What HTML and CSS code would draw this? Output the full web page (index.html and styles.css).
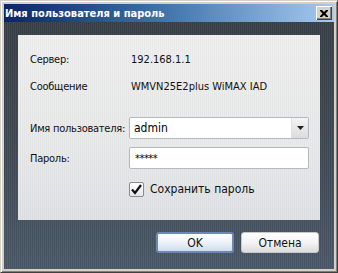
FILE: index.html
```html
<!DOCTYPE html>
<html lang="ru">
<head>
    <meta charset="UTF-8">
    <title>Имя пользователя и пароль</title>
    <link rel="stylesheet" href="styles.css">
</head>
<body>
    <div class="window">
        <div class="titlebar">
            <span class="title">Имя пользователя и пароль</span>
            <button class="close">
                <svg width="8" height="7" viewBox="0 0 8 7"><path d="M0 0h2l2 2 2-2h2v1l-2.5 2.5 2.5 2.5v1h-2l-2-2-2 2h-2v-1l2.5-2.5-2.5-2.5z" fill="#000"/></svg>
            </button>
        </div>
        <div class="content">
            <div class="panel">
                <div class="row row-server">
                    <span class="label">Сервер:</span>
                    <span class="value">192.168.1.1</span>
                </div>
                <div class="row row-message">
                    <span class="label">Сообщение</span>
                    <span class="value">WMVN25E2plus WiMAX IAD</span>
                </div>
                <div class="row row-user">
                    <span class="label">Имя пользователя:</span>
                    <div class="combo">
                        <span class="combo-text">admin</span>
                        <span class="combo-arrow">
                            <svg width="7" height="4" viewBox="0 0 7 4"><path d="M0 0h7l-3.5 4z" fill="#222"/></svg>
                        </span>
                    </div>
                </div>
                <div class="row row-pass">
                    <span class="label">Пароль:</span>
                    <div class="input">*****</div>
                </div>
                <div class="row row-save">
                    <span class="label"></span>
                    <label class="check">
                        <span class="box">
                            <svg width="13" height="13" viewBox="0 0 13 13"><path d="M2 6.5l3 3.5 6-8" fill="none" stroke="#111" stroke-width="2.2"/></svg>
                        </span>
                        Сохранить пароль
                    </label>
                </div>
            </div>
            <div class="actions">
                <button class="btn btn-ok">OK</button>
                <button class="btn">Отмена</button>
            </div>
        </div>
    </div>
</body>
</html>
```

FILE: styles.css
```css
body {
    margin: 0;
    background-color: #d4d0c8;
    font-family: 'DejaVu Sans Condensed', 'DejaVu Sans', sans-serif;
    font-size: 11px;
    color: #000000;
}

.window {
    width: 338px;
    height: 273px;
    box-sizing: border-box;
    padding: 3px;
    display: flex;
    flex-direction: column;
    background-color: #d4d0c8;
    border-top: 1px solid #d4d0c8;
    border-left: 1px solid #d4d0c8;
    border-right: 1px solid #404040;
    border-bottom: 1px solid #404040;
    box-shadow: inset 1px 1px 0 #ffffff, inset -1px -1px 0 #808080;
}

.titlebar {
    height: 18px;
    display: flex;
    align-items: center;
    justify-content: space-between;
    padding: 0 2px 0 1px;
    background: linear-gradient(90deg, #0a246a 0%, #3a6ea5 45%, #a6caf0 100%);
}

.title {
    color: #ffffff;
    font-weight: bold;
    font-size: 11px;
    white-space: nowrap;
}

.close {
    width: 16px;
    height: 14px;
    padding: 0;
    border: none;
    background-color: #d4d0c8;
    display: flex;
    align-items: center;
    justify-content: center;
    box-shadow: inset 1px 1px 0 #ffffff, inset -1px -1px 0 #404040, inset -2px -2px 0 #808080;
}

.content {
    flex: 1;
    display: flex;
    flex-direction: column;
    padding: 13px 14px 0 14px;
    background:
        repeating-linear-gradient(90deg, rgba(0, 0, 0, 0.07) 0 1px, rgba(255, 255, 255, 0.03) 1px 2px),
        linear-gradient(180deg, #3a424a 0%, #414c57 50%, #4c5b6b 100%);
}

.panel {
    height: 185px;
    box-sizing: border-box;
    padding: 13px 0 0 12px;
    display: flex;
    flex-direction: column;
    background:
        repeating-linear-gradient(90deg, rgba(0, 0, 0, 0.025) 0 1px, rgba(255, 255, 255, 0.05) 1px 2px),
        linear-gradient(180deg, #efefef 0%, #e8e9ea 60%, #dfe2e5 100%);
}

.row {
    display: flex;
    align-items: center;
    height: 22px;
}

.row-message {
    margin-top: 5px;
}

.row-user {
    margin-top: 20px;
}

.row-pass {
    margin-top: 8px;
}

.row-save {
    margin-top: 12px;
    height: 16px;
}

.label {
    width: 99px;
    flex-shrink: 0;
    color: #111111;
    white-space: nowrap;
    letter-spacing: -0.25px;
}

.value {
    padding-left: 2px;
    color: #111111;
    white-space: nowrap;
}

.combo,
.input {
    width: 180px;
    height: 22px;
    box-sizing: border-box;
    border: 1px solid #b5b8bc;
    border-radius: 2px;
    background-color: #ffffff;
    font-size: 12px;
}

.combo {
    display: flex;
    align-items: center;
    justify-content: space-between;
}

.combo-text {
    padding-left: 4px;
}

.combo-arrow {
    width: 16px;
    height: 20px;
    display: flex;
    align-items: center;
    justify-content: center;
    background: linear-gradient(180deg, #f4f4f4 0%, #dcdcdc 100%);
    border-left: 1px solid #e2e2e2;
}

.input {
    display: flex;
    align-items: center;
    padding-left: 5px;
    font-size: 11px;
    letter-spacing: -0.5px;
}

.check {
    display: flex;
    align-items: center;
    gap: 6px;
    color: #111111;
    font-size: 12px;
}

.box {
    width: 15px;
    height: 15px;
    box-sizing: border-box;
    border: 1px solid #8a8c8e;
    border-radius: 2px;
    background: linear-gradient(180deg, #ffffff 0%, #e6e6e6 100%);
    display: flex;
    align-items: center;
    justify-content: center;
}

.actions {
    display: flex;
    justify-content: flex-end;
    gap: 7px;
    padding-top: 12px;
    padding-right: 1px;
}

.btn {
    width: 78px;
    height: 21px;
    padding: 0;
    font-family: inherit;
    font-size: 12px;
    color: #111111;
    border: 1px solid #c8c8c8;
    border-radius: 3px;
    background: linear-gradient(180deg, #ffffff 0%, #f4f4f4 50%, #dcdcdc 100%);
}

.btn-ok {
    border: 2px solid #6b89b3;
    background: linear-gradient(180deg, #ffffff 0%, #eef2f8 50%, #cfdbec 100%);
}
```
